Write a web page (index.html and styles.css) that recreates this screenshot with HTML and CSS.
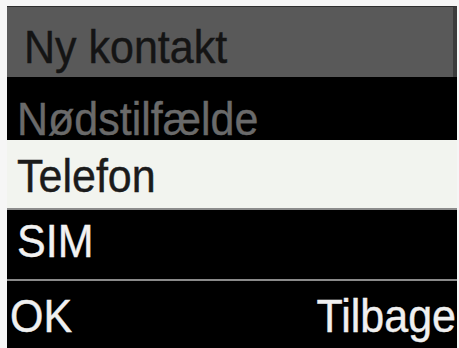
FILE: index.html
```html
<!DOCTYPE html>
<html lang="da">
<head>
<meta charset="utf-8">
<title>Ny kontakt</title>
<link rel="stylesheet" href="styles.css">
</head>
<body>
<div class="screen">
  <div class="title"><span class="txt">Ny kontakt</span></div>
  <div class="item disabled"><span class="txt">Nødstilfælde</span></div>
  <div class="item selected"><span class="txt">Telefon</span></div>
  <div class="item normal"><span class="txt">SIM</span></div>
  <div class="softkeys"><span class="txt">OK</span><span class="txt">Tilbage</span></div>
</div>
</body>
</html>
```
FILE: styles.css
```css
html, body {
  margin: 0;
  padding: 0;
  background: #f6f6f6;
}
body {
  width: 459px;
  height: 348px;
  overflow: hidden;
  font-family: "Liberation Sans", Arial, sans-serif;
  font-size: 43px;
  line-height: 40px;
}
.txt {
  display: inline-block;
  transform: scaleY(1.07);
  transform-origin: 0 34px;
  -webkit-text-stroke: 0.4px currentColor;
}
.screen {
  margin: 6px 0 0 7px;
  width: 450px;
  height: 342px;
  display: flex;
  flex-direction: column;
  background: #000;
}
.title {
  box-sizing: border-box;
  height: 71px;
  flex-shrink: 0;
  padding: 21px 0 0 17px;
  background: #595959;
  border-top: 1px solid #2e2e2e;
  border-right: 4px solid #3c3c3c;
  color: #141414;
}
.item {
  box-sizing: border-box;
  flex-shrink: 0;
  padding-left: 10px;
}
.disabled {
  height: 63px;
  padding-top: 23px;
  color: #6a6a6a;
}
.selected {
  height: 70px;
  padding-top: 17px;
  background: #f2f4ef;
  color: #1b1b1b;
  border-bottom: 2px solid #8c8c8c;
}
.normal {
  height: 71px;
  padding-top: 12px;
  color: #f2f2f2;
  border-bottom: 2px solid #8a8a8a;
}
.softkeys {
  box-sizing: border-box;
  flex: 1;
  display: flex;
  justify-content: space-between;
  padding: 16px 1px 0 3px;
  color: #f0f0f0;
}
```
